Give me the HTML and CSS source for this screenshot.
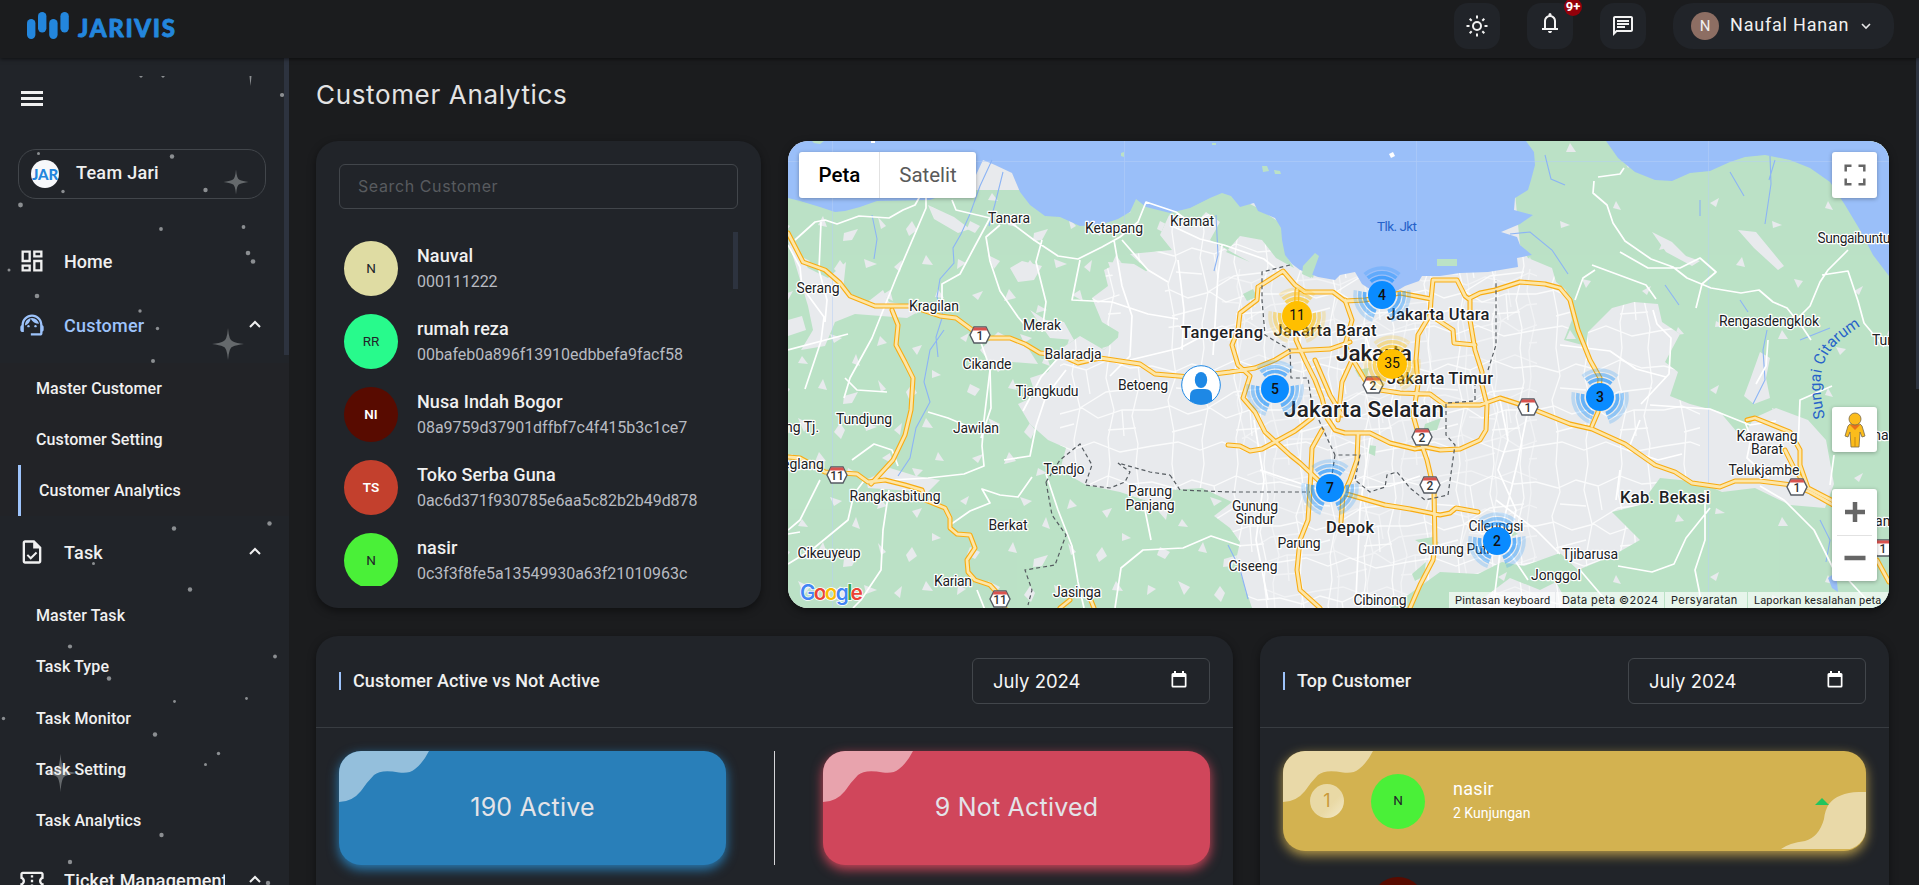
FILE: index.html
```html
<!DOCTYPE html>
<html lang="id">
<head>
<meta charset="utf-8">
<title>Jarivis - Customer Analytics</title>
<link rel="stylesheet" href="styles.css">
</head>
<body>
<header class="topbar">
  <svg class="logo" width="160" height="40" viewBox="20 6 160 40">
    <g fill="#2386dd"><rect x="27" y="19" width="8.4" height="20" rx="4.2"/><rect x="38" y="12" width="8.4" height="20.5" rx="4.2"/><rect x="49.200" y="19" width="8.400" height="20" rx="4.200"/><rect x="60.400" y="12" width="8.400" height="20.500" rx="4.200"/></g>
    <text x="78" y="37" textLength="97" lengthAdjust="spacing" class="logo-text">JARIVIS</text>
  </svg>
  <div class="tools">
    <div class="tool"><svg width="24" height="24" viewBox="0 0 24 24"><circle cx="12" cy="12" r="4" fill="none" stroke="#f2f2f2" stroke-width="2"/><path d="M12 1.500v3M12 19.500v3M1.500 12h3M19.500 12h3M4.700 4.700l2 2M17.300 17.300l2 2M4.700 19.300l2-2M17.300 6.700l2-2" stroke="#f2f2f2" stroke-width="2"/></svg></div>
    <div class="tool bell"><svg width="24" height="24" viewBox="0 0 24 24"><path fill="#f2f2f2" d="M4 19v-2h2v-7q0-2.075 1.250-3.688T10.500 4.200v-.7q0-.625.438-1.062T12 2t1.063.438T13.500 3.500v.7q2 .5 3.250 2.113T18 10v7h2v2zm8 3q-.825 0-1.412-.587T10 20h4q0 .825-.587 1.413T12 22m-4-5h8v-7q0-1.650-1.175-2.825T12 6T9.175 7.175T8 10z"/></svg><span class="badge">9+</span></div>
    <div class="tool"><svg width="24" height="24" viewBox="0 0 24 24"><path fill="#f2f2f2" d="M4 4h16v12H5.200L4 17.200zm0-2c-1.100 0-2 .9-2 2v18l4-4h14c1.100 0 2-.9 2-2V4c0-1.100-.9-2-2-2zm2 10h8v2H6zm0-3h12v2H6zm0-3h12v2H6z"/></svg></div>
    <div class="user"><span class="user-avatar">N</span><span class="user-name">Naufal Hanan</span><svg width="10" height="7" viewBox="0 0 10 7"><path d="M1 1l4 4 4-4" fill="none" stroke="#e6e6e6" stroke-width="1.600"/></svg></div>
  </div>
</header>
<div class="shell">
  <aside class="sidebar">
    <svg class="stars" width="284" height="827" viewBox="0 58 284 827">
      <defs><path id="spark" d="M0-16Q1-3 5-2.500Q8-1 16 0Q8 1 5 2.500Q1 3 0 16Q-1 3-5 2.500Q-8 1-16 0Q-8-1-5-2.500Q-1-3 0-16z"/></defs>
      <g fill="#8b8e91">
        <path d="M139 76h4l-2 2zM161 76h4l-2 2zM249.500 76h2l-1 10z"/>
        <circle cx="282" cy="95" r="2.100"/><circle cx="38.500" cy="153.500" r="1.500"/><circle cx="172" cy="156.500" r="2.200"/><circle cx="205.500" cy="190" r="2.200"/><circle cx="63" cy="191.500" r="1.700"/><circle cx="20.500" cy="205" r="2.400"/><circle cx="161" cy="229" r="1.900"/><circle cx="243.500" cy="227" r="1.900"/><circle cx="248" cy="253" r="2.300"/><circle cx="253" cy="261.500" r="2.300"/><circle cx="9" cy="270" r="1.500"/><circle cx="37" cy="296" r="2.300"/><circle cx="140" cy="311" r="1.700"/><circle cx="157.500" cy="328.500" r="1.700"/><circle cx="153" cy="361" r="2"/>
        <circle cx="174" cy="528.500" r="2.200"/><circle cx="269.500" cy="523.500" r="2.200"/><circle cx="93.500" cy="563.500" r="1.500"/><circle cx="190" cy="589.500" r="2.200"/><circle cx="70" cy="646.500" r="2.100"/><circle cx="275" cy="656.500" r="1.900"/><circle cx="109" cy="678.500" r="2.200"/><circle cx="174.500" cy="701.500" r="1.400"/><circle cx="246.500" cy="698.500" r="1.400"/><circle cx="3.500" cy="718.500" r="1.700"/><circle cx="155" cy="734.500" r="2.200"/><circle cx="218.500" cy="753.500" r="1.700"/><circle cx="205.500" cy="764.500" r="1.500"/><circle cx="161.500" cy="835" r="2.200"/><circle cx="70" cy="862" r="2.200"/><circle cx="268" cy="883" r="2.200"/>
      </g>
      <g fill="#65696c"><use href="#spark" transform="translate(236 182) scale(.78)"/><use href="#spark" transform="translate(228 344)"/><use href="#spark" transform="translate(60.500 773) scale(1 1.200)"/></g>
    </svg>
    <div class="burger"><i></i><i></i><i></i></div>
    <div class="team"><span class="team-logo"><b>JAR</b></span><span>Team Jari</span></div>
    <nav class="menu">
      <div class="row home"><svg width="28" height="28" viewBox="0 0 24 24"><path fill="#f0f0f0" d="M19 5v2h-4V5zM9 5v6H5V5zm10 8v6h-4v-6zM9 17v2H5v-2zM21 3h-8v6h8zM11 3H3v10h8zm10 8h-8v10h8zm-10 4H3v6h8z"/></svg><span>Home</span></div>
      <div class="row active"><svg width="28" height="28" viewBox="0 0 24 24"><path fill="#9dc3fb" d="M21 12.220C21 6.730 16.740 3 12 3c-4.690 0-9 3.650-9 9.280c-.6.340-1 .980-1 1.720v2c0 1.100.9 2 2 2h1v-6.100c0-3.870 3.130-7 7-7s7 3.130 7 7V19h-8v2h8c1.100 0 2-.9 2-2v-1.220c.590-.310 1-.920 1-1.640v-2.300c0-.7-.410-1.310-1-1.620"/><circle cx="9" cy="13" r="1" fill="#9dc3fb"/><circle cx="15" cy="13" r="1" fill="#9dc3fb"/><path fill="#9dc3fb" d="M18 11.030A6.040 6.040 0 0 0 12.050 6c-3.030 0-6.290 2.510-6.030 6.450a8.075 8.075 0 0 0 4.860-5.890c1.310 2.630 4 4.440 7.120 4.470"/></svg><span>Customer</span><svg class="chev" width="12" height="8" viewBox="0 0 12 8"><path d="M1 7l5-5 5 5" fill="none" stroke="#f0f0f0" stroke-width="2"/></svg></div>
      <div class="sub tinted"><a>Master Customer</a><a>Customer Setting</a><a class="current">Customer Analytics</a></div>
      <div class="row"><svg width="28" height="28" viewBox="0 0 24 24"><path fill="#f0f0f0" fill-rule="evenodd" d="M14 2H6c-1.100 0-2 .9-2 2v16c0 1.100.89 2 1.990 2H18c1.100 0 2-.9 2-2V8zm4 18H6V4h7v5h5z"/><path d="M8 14.500l2.900 2.900 5-5" fill="none" stroke="#f0f0f0" stroke-width="1.700"/></svg><span>Task</span><svg class="chev" width="12" height="8" viewBox="0 0 12 8"><path d="M1 7l5-5 5 5" fill="none" stroke="#f0f0f0" stroke-width="2"/></svg></div>
      <div class="sub tasks"><a>Master Task</a><a>Task Type</a><a>Task Monitor</a><a>Task Setting</a><a>Task Analytics</a></div>
      <div class="row"><svg width="28" height="28" viewBox="0 0 24 24"><path fill="#f0f0f0" d="M22 10V6c0-1.110-.9-2-2-2H4c-1.100 0-1.990.89-1.990 2v4c1.100 0 1.990.9 1.990 2s-.89 2-2 2v4c0 1.100.9 2 2 2h16c1.100 0 2-.9 2-2v-4c-1.100 0-2-.9-2-2s.9-2 2-2m-2-1.460c-1.190.690-2 1.990-2 3.460s.81 2.770 2 3.460V18H4v-2.540c1.190-.690 2-1.990 2-3.460c0-1.480-.8-2.770-1.990-3.460L4 6h16zM11 15h2v2h-2zm0-4h2v2h-2zm0-4h2v2h-2z"/></svg><span class="clip">Ticket Management</span><svg class="chev" width="12" height="8" viewBox="0 0 12 8"><path d="M1 7l5-5 5 5" fill="none" stroke="#f0f0f0" stroke-width="2"/></svg></div>
    </nav>
    <div class="side-scroll"></div>
  </aside>
  <main class="main">
    <h1>Customer Analytics</h1>
    <div class="upper">
      <section class="card customers">
        <div class="search">Search Customer</div>
        <div class="list">
          <div class="person"><span class="av khaki">N</span><div><b>Nauval</b><small>000111222</small></div></div>
          <div class="person"><span class="av mint">RR</span><div><b>rumah reza</b><small>00bafeb0a896f13910edbbefa9facf58</small></div></div>
          <div class="person"><span class="av maroon">NI</span><div><b>Nusa Indah Bogor</b><small>08a9759d37901dffbf7c4f415b3c1ce7</small></div></div>
          <div class="person"><span class="av brick">TS</span><div><b>Toko Serba Guna</b><small>0ac6d371f930785e6aa5c82b2b49d878</small></div></div>
          <div class="person"><span class="av green">N</span><div><b>nasir</b><small>0c3f3f8fe5a13549930a63f21010963c</small></div></div>
          <div class="list-scroll"></div>
        </div>
      </section>
      <section class="map">
        <svg class="map-canvas" width="1101" height="467" viewBox="788 141 1101 467">
          <defs>
            <pattern id="fields" width="190" height="163" patternUnits="userSpaceOnUse">
              <path fill="#e8eaed" d="M10 12l9-5-3 9zM42 30l6 8-10-1zM70 8l12 4-8 5zM96 28l4 12-8-3zM120 10l7 7-10 3zM152 22l10-3-5 10zM172 44l9 5-9 3zM20 58l10 5-5 7-8-4zM58 62l5-9 4 11zM84 70l14-4-6 11-9 1zM118 54l8 9-5 3zM146 66l6-8 5 9-8 6zM8 96l8 4-9 6zM38 92l12 6-6 8zM74 106l6-9 5 7-4 9zM104 96l13 5-11 4zM134 104l8-7-2 12zM166 92l7 10-11-1zM22 132l11-4-5 9zM54 138l5-12 7 9zM88 142l9 5-11 3zM122 132l8-5 3 11zM152 142l11 2-7 7zM178 126l6 9-9-1z"/>
            </pattern>
            <pattern id="sparse" width="212" height="187" patternUnits="userSpaceOnUse">
              <path fill="#e8eaed" d="M14 16l9-5-3 9zM76 34l10 4-9 3zM132 14l5 9-8-2zM180 52l3 9-8 2zM40 78l6-8 3 10zM98 92l9 2-5 7zM158 104l9-5-4 9zM20 134l9 5-10 1zM82 152l4-9 6 9zM140 160l10 2-6 6zM194 140l6 7-9 1z"/>
            </pattern>
            <pattern id="streets" width="128" height="116" patternUnits="userSpaceOnUse">
              <path fill="none" stroke="#fff" stroke-width="1.300" d="M0 18L22 24 40 16 62 22 84 12 106 20 128 18M0 62L18 58 36 66 58 60 74 70 98 62 128 62M0 98L26 94 48 102 70 94 96 104 128 98M20 0L24 28 16 52 22 84 20 116M52 0L48 26 56 60 50 92 52 116M86 0L82 30 90 62 84 90 86 116M112 0L116 34 108 68 114 96 112 116M24 40L50 42M56 60L82 44 116 40M84 82L112 80M20 84L50 76M62 22L66 46M98 62L100 88"/>
            </pattern>
            <g id="shield"><path d="M-6-8h12l4 8-4 8H-6l-4-8z" fill="#fff" stroke="#555b63" stroke-width="1.400"/><path d="M-6-7.500H6L7.500-4.500h-15z" fill="#d9534f"/></g>
            <g id="pulse" fill="none" stroke-width="3.600" transform="rotate(-130)"><circle r="17.500" pathLength="360" stroke-dasharray="80 40" opacity=".6"/><circle r="22.300" pathLength="360" stroke-dasharray="80 40" opacity=".4"/><circle r="27" pathLength="360" stroke-dasharray="80 40" opacity=".2"/></g>
            <path id="river" d="M1825 418C1821 400 1818 382 1823 366C1828 349 1841 338 1867 322"/>
            <path id="land-west" d="M788 190H1135L1170 213 1160 235 1172 250 1130 254 1148 270 1130 282 1120 262 1104 270 1108 286 1092 298 1102 322 1122 334 1104 350 1080 336 1062 348 1048 372 1030 378 1036 396 1018 404 1030 424 1048 440 1066 448 1060 470 1086 485 1120 492 1150 502 1166 520 1172 490 1202 488 1232 502 1214 516 1230 528 1240 542 1236 560 1252 608H788z"/>
            <path id="land-east" d="M1510 141H1889V608H1570L1556 582 1540 590 1510 578 1470 608H1390L1440 572 1478 574 1502 562 1524 566 1560 553 1578 570 1612 556 1640 540 1625 525 1612 512 1640 505 1660 478 1700 482 1722 492 1755 488 1790 505 1825 508 1834 484 1826 440 1808 420 1776 408 1754 418 1742 438 1720 412 1690 404 1670 396 1678 372 1665 362 1680 334 1662 322 1658 304 1634 302 1612 308 1588 332 1586 346 1564 340 1572 320 1566 290 1556 282 1552 268 1528 258 1520 245z"/>
            <path id="land-kramat" d="M1165 213L1190 202 1222 190 1258 208 1285 226 1286 255 1294 268 1276 258 1262 240 1240 236 1226 252 1250 262 1235 254 1210 240 1220 222 1206 212 1192 228z"/>
          </defs>
          <rect x="788" y="141" width="1101" height="467" fill="#e8eaed"/>
          <rect x="1060" y="200" width="640" height="408" fill="url(#streets)" opacity=".8"/>
          <path fill="url(#streets)" d="M1180 240H1500V580H1230z" transform="translate(37 29)" opacity=".45"/>
          <g fill="#bbe2c6"><use href="#land-west"/><use href="#land-east"/><use href="#land-kramat"/>
            <path d="M1243 294l10-5 4 8-10 4zM1302 265l14-12 3 3-6 22-8-6zM1425 424l16-6-4 12-14 2zM1368 445l8 1-1 10-7-3zM1415 540l18-3 6 6-12 4zM1412 574l14-12-2 14-9 5zM1355 370l14-2-2 8-8 1zM1484 536l26-8 8 6-12 5z"/></g>
          <use href="#land-west" fill="url(#fields)"/><use href="#land-east" fill="url(#sparse)"/>
          <g fill="#e8eaed"><path d="M788 240l20 28 20 10 18-16-3 28 22 14 18-14 6 12 36 6-18 10-52-4-20 8-10 24-24 4 12-20-5-24zM788 320l14-4 4 14-18 6zM1010 268l12-7 20 5-8 14-16 2zM928 205l26 12 16 12-12 4-24-14zM1030 310l16 10 18 2 10 18-24-2zM980 350l18-18 30 16 10 16-26-2-14 10zM866 480l24-12 26 8 24 4-12 12-60-4zM1750 380l10-28 10 6-4 20 4 20-16 6-10-8zM1652 232l20 10 14 14 14 5-8 5-26-14zM1738 230l18 2 28 34-6 4-24-22z"/><path d="M1108 262l26 2 30 18 6 60-30 20-24-6 6-54z"/></g>
          <g fill="#9bbff9">
            <path d="M788 141H1526L1534 152 1535 165 1531 180 1528 190 1515 198 1514 210 1533 215 1520 224 1501 232 1517 237 1520 245 1532 255 1517 258 1518 267 1500 270 1488 272 1460 273 1440 276 1422 276 1419 281 1405 286 1395 292H1374L1362 284 1355 272 1340 275 1335 280 1318 277 1300 270 1292 264 1285 255 1282 240 1281 228 1275 218 1258 211 1254 203 1240 207 1231 196 1222 193 1210 198 1190 208 1170 213 1146 207 1136 199 1130 212 1118 219 1100 225 1080 226 1060 217 1045 216 1030 205 1020 192 1012 173 995 165 983 160 976 175 960 188 930 200 877 201 860 207 845 211 835 212 820 207 800 201 788 198z"/>
            <path d="M1606 141L1618 158 1635 172 1655 180 1672 181 1690 173 1710 171 1730 162 1745 157 1765 155 1790 160 1810 168 1830 182 1845 205 1860 230 1873 255 1889 276V141zM1828 578l8-6 2 20-6-4z"/>
          </g>
          <g fill="#bbe2c6"><path d="M812 141h12l-4 3-6-1zM1262 166h5l2 5-6 1zM1274 170l6 1 1 3h-6zM1121 153l3-1v5l-3-1zM1437 259h20v7h-20zM1303 266l12-13 4 3-8 22-9-4zM1212 143h4v2h-4z"/></g>
          <path fill="#fff" d="M871 141h4v2h-4zM1389 154l4-2 2 4-4 2z"/>
          <path stroke="#b6cff8" stroke-width=".7" d="M788 161.500H1889M832.500 141V610M1124.500 141V230M1416.500 141V270M1708.500 141V610" opacity=".7"/>
          <g fill="none" stroke="#8cb4f5" stroke-width="1.100"><path d="M992 160l-12 26-10 28-9 20-8 14 1 15-14 16-3 18 6 18-7 22 2 20M1003 172l-8 32-6 22M872 215l5 24-3 20M944 330l-14 20-6 32 6 20-14 26-6 30-12 18M1775 160l-6 20M1770 156l1 28-6 40M1545 155l6 24 14 6M1510 234l20-2 22 18 16 24M1767 330l-4 20 2 30-12 24M1820 520l10 20-4 22M1228 545l12 24 8 30M1216 215l2 40-4 16M1740 300l8 12M1700 200v16M1730 172l14 24M1665 285l14 20M1800 340l30-12"/></g>
          <g class="road-white">
            <path d="M788 245l12 22 2 20 22 30-3 24-16 48M795 240l20-18 10-2 12 4 22-8 30 2 14-8 12-5 8-14M821 222l-2 48 8 30-2 22M926 198v10l-30 70-24 60-22 40-6 20M952 200l4 10 34 8M990 218l-14 26-16 30-18 10v28M1000 225l-14 12 4 24 10 30 18 26 12 14M1010 222l24 18 24 16 20 3 24-12 18-10 18-15 8-20 30 10 16 12M1114 240l8 46 10 30-2 40-20 20M1122 240l26 30 20 12M1042 240l-6 22 10 40-4 30M1080 260l-8 40 40 2 36 12 30 5M980 340l10 28 1 40-10 30M1061 355l-20 22-18 34M1130 360l50-12 30-16"/>
            <path d="M788 350l60-16M845 378l12 12 30 2M990 370l-6 50-2 26 2 20-20 8-36 4-38 2M866 478l-12 16-6 26-34 28-26 16M889 490l-6 40-2 40-20 30-8 8M852 460l22-16 18 6 6 16M820 480l-20 40-12 10M950 525l20-14 20-8-8-14 18 6 18 2 14-20M1046 474l12 36 14 36 6 36 6 26M1066 370l-20 26-10 30-6 30-26 4M1115 608l6-40 22-18 40-2 28-12 30 10M1145 510l6 30M788 534l12-2M977 590l8 20M928 412l20 6 24 10"/>
            <path d="M1170 225l30 14 24 6 40 14 22 18M1222 245l-4 30-3 50-2 30M1178 260l6 50-2 40M1254 420l10 60-8 60 12 60M1364 330l12 40M1260 470l60 20 70-4 30-10M1370 438l-10 70-4 90M1500 400l8 40-10 30 18 40-8 40 20 30M1528 410l-10 50-14 60-10 80M1496 500l40 30 24 24"/>
            <path d="M1594 181l-1 12 14 12 6 18 12 18 26 18 22 8 14 11 24 10 30 5 18-3 14 12 14 6 16 20 8 12M1620 252l28 16h32l20-10 16 14-14 12-6 24M1575 300l8-22 12-8M1653 310l4 14 14 14-2 36-28 30M1560 345l50 6 26 18 30 8M1592 265l54 20 10 14M1624 168l-4 6-22 3M1848 250l-20 20-8 12-10 24-20 20M1822 275l26-4 10 30 6 22 20 24M1768 340l-2 26-10 18M1650 405l60 4 40 16 26-4M1745 422l6 16-4 20 22 20M1640 420l-12 30 30 10 24-6M1620 470l-4 30M1705 490v50l-10 30 6 30M1710 508l-24 30-12 26-22 8-34-6M1760 486l24 14 30 30 20 40M1580 570l34 40M1798 450l2-50 32-14M1834 455l-4 30M1841 572l26 28"/>
          </g>
          <g class="road-gold">
            <path id="r1" d="M788 233L803 262 825 270 840 283 850 296 875 306 910 306 940 316 956 318 975 332 985 338H1010L1025 344 1040 353 1060 355 1078 363 1100 358 1140 364 1155 374 1190 377 1230 372 1255 368 1275 360 1290 351 1330 349 1350 342M1258 287L1283 271 1295 285 1305 292H1333L1345 301 1365 300 1400 293 1431 299M1258 287L1257 300 1240 313 1238 330 1232 345 1238 365 1250 376 1243 398 1255 412 1265 432 1290 455 1300 463 1318 480 1330 490 1350 495 1385 505 1410 509 1440 515 1450 513 1456 508 1478 512M1228 445L1240 446 1250 451 1262 449 1295 431 1312 418M1297 290L1296 340 1305 360 1315 380 1322 398 1327 418 1335 430 1345 433H1370L1390 443 1415 449 1425 447 1440 450 1460 449 1480 440 1486 430 1487 405 1482 385V372L1475 350 1470 320V300L1465 296 1457 280H1433L1431 300 1430 315 1418 335 1416 360 1418 385 1413 415 1420 440 1427 460 1434 490 1435 545 1433 560 1420 585 1410 608M1470 298L1480 293 1495 290 1520 282 1545 284 1560 288 1570 300 1578 330 1590 360 1600 378 1598 412 1592 426M1350 355L1365 380 1380 390 1400 393 1430 394 1445 405 1480 405 1500 398 1525 406 1570 424 1592 429 1625 444 1655 465 1675 472 1692 483 1720 487 1735 481H1760L1792 485 1810 492 1835 506"/>
            <path id="r2" d="M892 310L898 325 896 345 905 362 913 378 911 410 905 435 893 460 871 484M788 457L800 458 825 472 857 474 868 482 885 480 905 485 922 490 925 500 945 508 950 518V528L957 534 970 535 975 548 967 560 968 572 975 580 990 585 1000 596 1005 608M1322 430L1312 448 1310 490 1308 520 1300 540 1297 570 1300 590 1320 608M1358 435L1357 460 1350 480 1343 495 1341 522M1345 300L1352 320 1345 345 1352 360 1342 382 1338 420M1430 315L1453 330 1454 343 1475 345M1747 420L1755 418 1790 432 1800 450V465L1808 488M1785 450L1795 470 1808 488 1835 502M1877 560L1889 582M1060 608L1070 600M1090 598L1094 608M1315 360L1330 395 1342 415"/>
          </g>
          <g class="road-core"><use href="#r1"/><use href="#r2"/></g>
          <path class="border" d="M1290 265L1262 272V300L1265 335 1290 350 1291 378H1308L1312 405 1328 440 1335 455 1360 455 1355 480 1370 492 1385 487 1387 475 1397 472 1410 488 1425 500 1448 495 1455 445 1446 435V403L1475 401V385M1488 370L1496 345V280M1335 455L1332 475M1170 475L1180 490 1230 492 1310 492M1046 482L1060 460 1080 444 1092 465 1085 485 1110 488 1125 482 1130 472 1118 463 1150 472 1170 475M1046 482L1052 515 1066 535 1055 565 1025 570 1032 590 1028 605"/>
          <g class="lbl">
            <text x="1009" y="223" textLength="42">Tanara</text><text x="1114" y="233" textLength="58">Ketapang</text><text x="1192" y="226" textLength="44">Kramat</text><text x="818" y="293" textLength="43">Serang</text><text x="934" y="311" textLength="50">Kragilan</text><text x="1042" y="330" textLength="38">Merak</text><text x="1073" y="359" textLength="57">Balaradja</text><text x="987" y="369" textLength="49">Cikande</text><text x="1143" y="390" textLength="50">Betoeng</text><text x="1047" y="396" textLength="63">Tjangkudu</text><text x="864" y="424" textLength="56">Tundjung</text><text x="976" y="433" textLength="46">Jawilan</text><text x="802" y="432">ng Tj.</text><text x="803" y="469">eglang</text><text x="1064" y="474" textLength="41">Tendjo</text><text x="895" y="501" textLength="91">Rangkasbitung</text><text x="1150" y="496" textLength="44">Parung</text><text x="1150" y="510" textLength="49">Panjang</text><text x="1008" y="530" textLength="39">Berkat</text><text x="829" y="558" textLength="63">Cikeuyeup</text><text x="953" y="586" textLength="38">Karian</text><text x="1077" y="597" textLength="48">Jasinga</text><text x="1255" y="511" textLength="46">Gunung</text><text x="1255" y="524" textLength="39">Sindur</text><text x="1299" y="548" textLength="43">Parung</text><text x="1253" y="571" textLength="49">Ciseeng</text><text x="1380" y="605" textLength="53">Cibinong</text><text x="1496" y="531" textLength="55">Cileungsi</text><text x="1456" y="554" textLength="76">Gunung Putri</text><text x="1590" y="559" textLength="56">Tjibarusa</text><text x="1556" y="580" textLength="50">Jonggol</text><text x="1764" y="475" textLength="71">Telukjambe</text><text x="1767" y="441" textLength="61">Karawang</text><text x="1767" y="454" textLength="32">Barat</text><text x="1769" y="326" textLength="100">Rengasdengklok</text><text x="1854" y="243" textLength="73">Sungaibuntu</text><text x="1882" y="345">Tur</text><text x="1881" y="440">na</text><text x="1885" y="526">am</text>
          </g>
          <g class="lbl mid"><text x="1222" y="338" textLength="82">Tangerang</text><text x="1325" y="336" textLength="103">Jakarta Barat</text><text x="1438" y="320" textLength="103">Jakarta Utara</text><text x="1440" y="384" textLength="106">Jakarta Timur</text><text x="1350" y="533" textLength="48">Depok</text><text x="1665" y="503" textLength="90">Kab. Bekasi</text></g>
          <g class="lbl big"><text x="1374" y="361" textLength="76">Jakarta</text><text x="1364" y="417" textLength="160">Jakarta Selatan</text></g>
          <text class="water-lbl" x="1377" y="231" textLength="40">Tlk. Jkt</text>
          <text class="water-lbl river-lbl"><textPath href="#river" textLength="109">Sungai Citarum</textPath></text>
          <g class="shield-no"><use href="#shield" x="980" y="335"/><text x="980" y="340">1</text><use href="#shield" x="837" y="475"/><text x="837" y="480">11</text><use href="#shield" x="1000" y="599"/><text x="1000" y="604">11</text><use href="#shield" x="1373" y="385"/><text x="1373" y="390">2</text><use href="#shield" x="1528" y="407"/><text x="1528" y="412">1</text><use href="#shield" x="1422" y="437"/><text x="1422" y="442">2</text><use href="#shield" x="1430" y="485"/><text x="1430" y="490">2</text><use href="#shield" x="1797" y="487"/><text x="1797" y="492">1</text><use href="#shield" x="1883" y="548"/><text x="1883" y="553">1</text></g>
          <g><circle cx="1201" cy="385" r="19.300" fill="#fff" stroke="#1e88e5" stroke-width="1"/><ellipse cx="1201" cy="380" rx="6.200" ry="8" fill="#1e88e5"/><path d="M1190 401v-5q0-7 7-7h8q7 0 7 7v5q-11 7-22 0z" fill="#1e88e5"/></g>
          <g class="cluster blue"><g transform="translate(1382 295)"><use href="#pulse"/><circle r="14"/><text y="5">4</text></g><g transform="translate(1275 389)"><use href="#pulse"/><circle r="14"/><text y="5">5</text></g><g transform="translate(1330 488)"><use href="#pulse"/><circle r="14"/><text y="5">7</text></g><g transform="translate(1600 397)"><use href="#pulse"/><circle r="14"/><text y="5">3</text></g><g transform="translate(1497 541)"><use href="#pulse"/><circle r="14"/><text y="5">2</text></g></g>
          <g class="cluster yellow"><g transform="translate(1297 316)"><use href="#pulse"/><circle r="15"/><text y="4">11</text></g><g transform="translate(1392 364)"><use href="#pulse"/><circle r="15"/><text y="4">35</text></g></g>
          <text class="google" x="800" y="600" textLength="63"><tspan fill="#4285f4">G</tspan><tspan fill="#ea4335">o</tspan><tspan fill="#fbbc04">o</tspan><tspan fill="#4285f4">g</tspan><tspan fill="#34a853">l</tspan><tspan fill="#ea4335">e</tspan></text>
        </svg>
        <div class="map-ui">
          <div class="map-types"><span class="on">Peta</span><span>Satelit</span></div>
          <div class="map-side">
            <div class="mbtn"><svg width="22" height="22" viewBox="0 0 22 22"><path d="M1.700 7.500V1.700h5.800M14.500 1.700h5.800v5.800M20.300 14.500v5.800h-5.800M7.500 20.300H1.700v-5.800" fill="none" stroke="#666" stroke-width="2.500"/></svg></div>
            <div class="mbtn peg"><svg width="22" height="36" viewBox="0 0 22 36"><path d="M6 12h10l2 2 3 10-3 1-2-5-1 15H7L6 20l-2 5-3-1 3-10z" fill="#fbbc1c" stroke="#7a6a4a" stroke-width=".8"/><path d="M6 13h10l-5 5z" fill="#e8711c"/><circle cx="11" cy="7" r="6" fill="#fbbc1c" stroke="#7a6a4a" stroke-width=".8"/><path d="M11 25v10" stroke="#c78a10"/></svg></div>
            <div class="zoomer"><span><svg width="22" height="22" viewBox="0 0 22 22"><path d="M11 1v20M1 11h20" stroke="#666" stroke-width="4.500"/></svg></span><i></i><span><svg width="22" height="22" viewBox="0 0 22 22"><path d="M.5 11h21" stroke="#666" stroke-width="4.500"/></svg></span></div>
          </div>
          <div class="attrib"><span class="a1">Pintasan keyboard</span><span class="a2">Data peta ©2024</span><span class="a3">Persyaratan</span><span class="a4">Laporkan kesalahan peta</span></div>
        </div>
      </section>
    </div>
    <div class="lower">
      <section class="card panel">
        <div class="panel-head"><h2>Customer Active vs Not Active</h2><div class="month"><span>July 2024</span><svg width="16" height="18" viewBox="0 0 16 18"><path fill="#fff" fill-rule="evenodd" d="M3 0h2v2h6V0h2v2h1q1.500 0 1.500 1.500V15q0 1.500-1.500 1.500H2Q.5 16.500.5 15V3.500Q.5 2 2 2h1zM2.200 6v8.800h11.600V6z"/></svg></div></div>
        <div class="stats">
          <div class="stat blue-stat"><svg width="90" height="51" viewBox="0 0 90 51"><path d="M0 0H90Q84 12 76 18Q70 23 60 21.500Q42 18 35 24Q28 31 22 40Q13 51 0 51z" fill="#fff" opacity=".5"/></svg><span>190 Active</span></div>
          <i class="split"></i>
          <div class="stat red-stat"><svg width="90" height="51" viewBox="0 0 90 51"><path d="M0 0H90Q84 12 76 18Q70 23 60 21.500Q42 18 35 24Q28 31 22 40Q13 51 0 51z" fill="#fff" opacity=".5"/></svg><span>9 Not Actived</span></div>
        </div>
      </section>
      <section class="card panel">
        <div class="panel-head"><h2>Top Customer</h2><div class="month"><span>July 2024</span><svg width="16" height="18" viewBox="0 0 16 18"><path fill="#fff" fill-rule="evenodd" d="M3 0h2v2h6V0h2v2h1q1.500 0 1.500 1.500V15q0 1.500-1.500 1.500H2Q.5 16.500.5 15V3.500Q.5 2 2 2h1zM2.200 6v8.800h11.600V6z"/></svg></div></div>
        <div class="ranks">
          <div class="rank gold">
            <svg class="wave" width="90" height="51" viewBox="0 0 90 51"><path d="M0 0H90Q84 12 76 18Q70 23 60 21.500Q42 18 35 24Q28 31 22 40Q13 51 0 51z" fill="#fff" opacity=".5"/></svg>
            <svg class="wave2" width="85" height="58" viewBox="0 0 85 58"><path d="M85 0Q58-1 48 12Q44 18 43 27Q38 45 24 49Q8 51 0 57H85z" fill="#fff" opacity=".5"/></svg>
            <span class="no">1</span><span class="av green">N</span><div class="who"><b>nasir</b><small>2 Kunjungan</small></div><i class="up"></i>
          </div>
          <div class="rank"><span class="no hidden"></span><span class="av maroon"></span></div>
        </div>
      </section>
    </div>
    <div class="page-scroll"></div>
  </main>
</div>
</body>
</html>
```
FILE: styles.css
```css
* { box-sizing: border-box; }
body { margin: 0; height: 885px; overflow: hidden; background: #1b1c1e; color: #f0f0f0; font-family: Roboto, sans-serif; display: flex; flex-direction: column; }
.topbar { height: 58px; flex: none; background: #1b1c1e; box-shadow: 0 1px 4px rgba(0,0,0,.6); display: flex; justify-content: space-between; align-items: flex-start; padding: 3px 25px 0 20px; position: relative; z-index: 2; }
.logo { margin-top: 3px; }
.logo-text { font: 900 24px Lato, sans-serif; fill: #2386dd; stroke: #2386dd; stroke-width: .8px; stroke-linejoin: round; }
.tools { display: flex; gap: 27px; }
.tool { width: 46px; height: 46px; border-radius: 14px; background: #212429; display: flex; align-items: center; justify-content: center; position: relative; }
.bell svg { margin-top: -7px; }
.badge { position: absolute; left: 37px; top: -5px; width: 18px; height: 18px; border-radius: 50%; background: #93000a; color: #fff; font: 700 13px/18px Roboto, sans-serif; text-align: center; }
.user { width: 221px; height: 46px; border-radius: 20px; background: #212429; display: flex; align-items: center; padding-left: 18px; }
.user-avatar { width: 28px; height: 28px; border-radius: 50%; background: #8d6e63; text-align: center; font-size: 15px; line-height: 29px; margin-right: 11px; }
.user-name { font-size: 18px; letter-spacing: .8px; margin: -3px 14px 0 0; width: 117px; white-space: nowrap; }
.shell { flex: 1; display: flex; min-height: 0; }
.sidebar { width: 289px; flex: none; background: #212429; position: relative; overflow: hidden; padding-top: 33px; }
.stars { position: absolute; left: 0; top: 0; }
.side-scroll { position: absolute; right: 0; top: 0; width: 5px; height: 297px; background: #2d333f; }
.burger { position: relative; margin-left: 21px; width: 22px; height: 15px; display: flex; flex-direction: column; justify-content: space-between; }
.burger i { height: 3px; background: #f0f0f0; }
.team { position: relative; margin: 43px 0 0 18px; width: 248px; height: 50px; border: 1px solid #42464b; border-radius: 18px; display: flex; align-items: center; padding-left: 12px; gap: 17px; font-size: 18px; font-weight: 500; letter-spacing: .3px; padding-bottom: 3px; }
.team-logo { width: 28px; height: 28px; border-radius: 50%; background: #f7f8fa; color: #2386dd; overflow: hidden; display: flex; align-items: center; justify-content: center; font: 900 15px Lato, sans-serif; letter-spacing: -.2px; margin-top: 2px; }
.team-logo b { font-weight: 900; }
.menu { position: relative; margin-top: 30px; }
.row { height: 64px; display: flex; align-items: center; padding: 0 28px 0 18px; font-size: 18px; font-weight: 500; letter-spacing: .2px; }
.home { letter-spacing: 0; }
.row > span { margin-left: 18px; flex: 1; white-space: nowrap; }
.row > .clip { flex: none; width: 161px; overflow: hidden; margin-right: auto; }
.chev { margin-bottom: 3px; }
.active { color: #9dc3fb; }
.sub { margin: 6px 0 4px; font-size: 16px; font-weight: 500; letter-spacing: .11px; position: relative; }
.tinted { background: #222327; }
.tasks { margin-bottom: 3px; }
.sub a { display: flex; align-items: center; height: 51.1px; padding-left: 36px; }
.sub .current { margin-left: 18px; border-left: 3px solid #9dc3fb; padding-left: 18px; }
.main { flex: 1; min-width: 0; position: relative; padding: 0 30px 0 27px; overflow: hidden; }
h1 { margin: 18px 0 29px; height: 36px; font: 400 26px/37px Inter, sans-serif; letter-spacing: .65px; color: #e3e3e3; white-space: nowrap; }
.upper { display: flex; gap: 27px; height: 467px; }
.card { background: #212429; border-radius: 22px; box-shadow: 0 3px 8px rgba(0,0,0,.45); }
.customers { width: 445px; flex: none; padding: 23px; }
.search { height: 45px; border: 1px solid #42464b; border-radius: 6px; padding-left: 18px; font: 400 16px/43px Inter, sans-serif; letter-spacing: .6px; color: #585b5f; }
.list { margin-top: 23px; height: 354px; overflow: hidden; padding: 9px 5px; position: relative; }
.list-scroll { position: absolute; right: 0; top: 0; width: 5px; height: 57px; background: #2d333f; }
.person { height: 73px; display: flex; align-items: flex-start; }
.av { width: 54px; height: 55px; flex: none; border-radius: 50%; color: #212429; font-size: 13.500px; display: flex; align-items: center; justify-content: center; padding-bottom: 2px; }
.khaki { background: #dfdca3; }
.mint { background: #28fa8c; }
.maroon { background: #580b00; color: #fff; font-weight: 600; }
.brick { background: #c3402d; color: #fff; font-weight: 600; }
.green { background: #4af038; }
.person > div { margin: 2px 0 0 19px; }
.person b, .person small { display: block; white-space: nowrap; }
.person b { font-size: 18px; font-weight: 500; line-height: 25px; letter-spacing: .1px; }
.person small { font-size: 16px; line-height: 27px; color: #b8bbc2; letter-spacing: -.04px; }
.map { flex: 1; border-radius: 20px; overflow: hidden; position: relative; box-shadow: 0 3px 8px rgba(0,0,0,.45); }
.map-canvas { display: block; }
.map-ui { position: absolute; inset: 0; }
.road-white { fill: none; stroke: #fff; stroke-width: 1.700; stroke-linejoin: round; }
.road-gold { fill: none; stroke: #f8ac12; stroke-width: 5; stroke-linejoin: round; stroke-linecap: round; }
.road-core { fill: none; stroke: #fde6a8; stroke-width: 2.800; stroke-linejoin: round; stroke-linecap: round; }
#r1, #r2 { stroke-width: inherit; }
.border { fill: none; stroke: #555b60; stroke-width: 1.200; stroke-dasharray: 4 3; }
.lbl { font: 400 14px Roboto, sans-serif; fill: #202124; stroke: #fff; stroke-width: 2.500px; stroke-linejoin: round; paint-order: stroke; text-anchor: middle; }
.mid { font-size: 16.500px; font-weight: 500; }
.big { font-size: 22.500px; font-weight: 500; }
.water-lbl { font: 400 13.500px Roboto, sans-serif; fill: #2762c9; }
.river-lbl { font-size: 15.500px; }
.shield-no { font: 500 12px Roboto, sans-serif; fill: #333; text-anchor: middle; }
.cluster { font: 500 14px Roboto, sans-serif; text-anchor: middle; }
.cluster text { fill: #111; stroke: none; }
.yellow text { font-weight: 400; }
.blue { stroke: #0a8bff; }
.yellow { stroke: #ffbf00; }
.blue > g > circle { fill: #0a8bff; stroke: none; }
.yellow > g > circle { fill: #ffbf00; stroke: none; }
.google { font: 600 21px Inter, sans-serif; stroke: #fff; stroke-width: 1.500px; paint-order: stroke; }
.map-types { position: absolute; left: 11px; top: 11px; height: 46px; display: flex; background: #fff; border-radius: 3px; box-shadow: 0 1px 4px rgba(0,0,0,.3); font-size: 20.500px; line-height: 46px; color: #5a5a5a; }
.map-types span { width: 96px; text-align: center; }
.map-types .on { width: 81px; padding-left: 1px; color: #000; font-weight: 500; border-right: 1px solid #e2e2e2; }
.map-side { position: absolute; right: 12px; top: 11px; width: 45px; }
.mbtn { height: 46px; background: #fff; border-radius: 3px; display: flex; align-items: center; justify-content: center; box-shadow: 0 1px 4px rgba(0,0,0,.3); }
.peg { margin-top: 209px; height: 45px; }
.zoomer { margin-top: 37px; height: 92px; background: #fff; border-radius: 3px; box-shadow: 0 1px 4px rgba(0,0,0,.3); display: flex; flex-direction: column; align-items: center; }
.zoomer span { flex: 1; display: flex; align-items: center; }
.zoomer i { width: 35px; height: 1px; background: #e2e2e2; }
.attrib { position: absolute; right: 0; bottom: 0; height: 16px; display: flex; width: 440px; font-size: 11px; line-height: 17px; color: #222; white-space: nowrap; }
.attrib span { background: rgba(255,255,255,.65); padding-left: 6px; margin-right: 1px; }
.a1 { width: 106px; letter-spacing: .3px; }
.a2 { width: 108px; font-family: Inter, sans-serif; letter-spacing: .4px; }
.a3 { width: 82px; font-family: Inter, sans-serif; letter-spacing: .4px; }
.a4 { flex: 1; letter-spacing: .22px; }
.attrib .a4 { margin-right: 0; }
.lower { display: grid; grid-template-columns: 917px 629px; gap: 27px; margin-top: 28px; height: 400px; }
.panel-head { height: 92px; border-bottom: 1px solid #383c41; padding: 0 23px; display: flex; align-items: center; justify-content: space-between; }
h2 { margin: 0 0 1px; border-left: 2px solid #9dc3fb; padding-left: 12px; font-size: 18px; line-height: 18px; font-weight: 500; letter-spacing: .08px; }
.month { width: 238px; height: 46px; border: 1px solid #42464b; border-radius: 6px; display: flex; align-items: center; justify-content: space-between; padding: 0 22px 0 20px; font: 400 18.500px Inter, sans-serif; color: #f5f5f5; margin-bottom: 1px; }
.month svg { margin-bottom: 2px; }
.stats { display: flex; padding: 23px; justify-content: space-between; }
.stat { width: 387px; height: 114px; border-radius: 22px; display: flex; align-items: center; justify-content: center; position: relative; font: 400 25px Inter, sans-serif; letter-spacing: .2px; color: #e3e3e8; padding-bottom: 2px; }
.stat svg { position: absolute; left: 0; top: 0; border-top-left-radius: 22px; }
.blue-stat { background: #297fb9; box-shadow: 0 4px 12px #297fb9; }
.red-stat { background: #d0465b; box-shadow: 0 4px 12px #d0465b; }
.split { width: 1px; background: #d5d5d8; }
.ranks { padding: 23px; }
.rank { height: 100px; display: flex; align-items: center; padding-left: 27px; position: relative; margin-bottom: 3px; }
.gold { background: #d3b250; border-radius: 22px; box-shadow: 0 4px 12px rgba(211,178,80,.85); }
.wave { position: absolute; left: 0; top: 0; border-top-left-radius: 22px; }
.wave2 { position: absolute; right: 0; bottom: 1px; border-bottom-right-radius: 22px; }
.no { position: relative; width: 34px; height: 34px; border-radius: 50%; background: linear-gradient(135deg, #e9d9a5 60%, #f3e9c8); color: #c99a3a; font: 400 18px/34px Inter, sans-serif; text-align: center; margin-right: 27px; }
.hidden { visibility: hidden; }
.who { margin-left: 28px; margin-top: 0; color: #fff; flex: 1; }
.who b, .who small { display: block; line-height: 25px; font-weight: 400; }
.who b { font-size: 18px; letter-spacing: .3px; }
.who small { font-size: 14px; }
.up { position: relative; border: 7px solid transparent; border-top: 0; border-bottom-color: #22c55e; margin-right: 37px; }
.page-scroll { position: absolute; right: 0; top: 0; width: 3px; height: 331px; background: #2d333f; }
```
